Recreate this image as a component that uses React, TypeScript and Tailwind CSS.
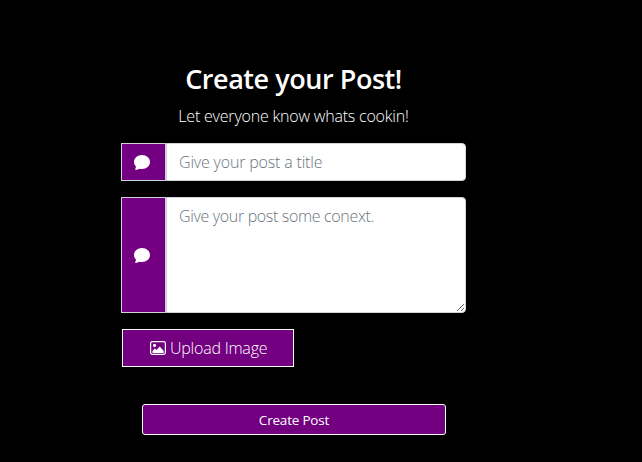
import { BsChatFill } from "react-icons/bs";

function Addon() {
  return (
    <span className="flex w-[45px] shrink-0 items-center border border-[#ced4da] bg-[#720080] pl-3 text-white">
      <BsChatFill size={16} />
    </span>
  );
}

function ImageIcon() {
  return (
    <svg width="16" height="16" viewBox="0 0 16 16" fill="none" aria-hidden="true">
      <rect x="0.6" y="1.6" width="14.8" height="12.8" rx="1.8" stroke="currentColor" strokeWidth="1.2" />
      <circle cx="4.5" cy="5.4" r="1.6" fill="currentColor" />
      <path d="M2.5 13v-2.2L5 8.6l1.5 1.3L9.7 6.6l4 4.4v2z" fill="currentColor" />
    </svg>
  );
}

const field =
  "min-w-0 flex-1 rounded-r border border-[#ced4da] bg-white px-3 py-1.5 text-base font-light text-[#212529] outline-none placeholder:text-[#6c757d]";

export default function App() {
  return (
    <main className="h-[462px] w-[642px] overflow-hidden bg-black pt-[62px] pl-[121px] font-['Open_Sans','Noto_Sans',sans-serif] text-white">
      <form className="flex w-[345px] flex-col" onSubmit={(e) => e.preventDefault()}>
        <h3 className="text-center text-[27px] leading-[34px] font-semibold tracking-[-0.45px] whitespace-nowrap">Create your Post!</h3>
        <p className="mt-2 text-center text-base leading-6 font-light tracking-[-0.2px] whitespace-nowrap">Let everyone know whats cookin!</p>
        <div className="mt-[15px] flex h-[38px]">
          <Addon />
          <input className={field + " tracking-[-0.18px]"} placeholder="Give your post a title" />
        </div>
        <div className="mt-4 flex h-[116px]">
          <Addon />
          <textarea className={field + " resize tracking-[-0.34px]"} placeholder="Give your post some conext." />
        </div>
        <button type="button" className="mt-4 ml-px flex h-[38px] w-[172px] items-center gap-1 border border-white bg-[#720080] pl-[27px] text-base font-light tracking-[-0.22px] whitespace-nowrap">
          <ImageIcon />
          <span>Upload Image</span>
        </button>
        <button type="submit" className="mt-[37px] ml-[21px] h-[31px] w-[304px] rounded-[3px] border border-white bg-[#720080] pt-px text-[13.5px] leading-[21px] tracking-[-0.2px]">
          Create Post
        </button>
      </form>
    </main>
  );
}
